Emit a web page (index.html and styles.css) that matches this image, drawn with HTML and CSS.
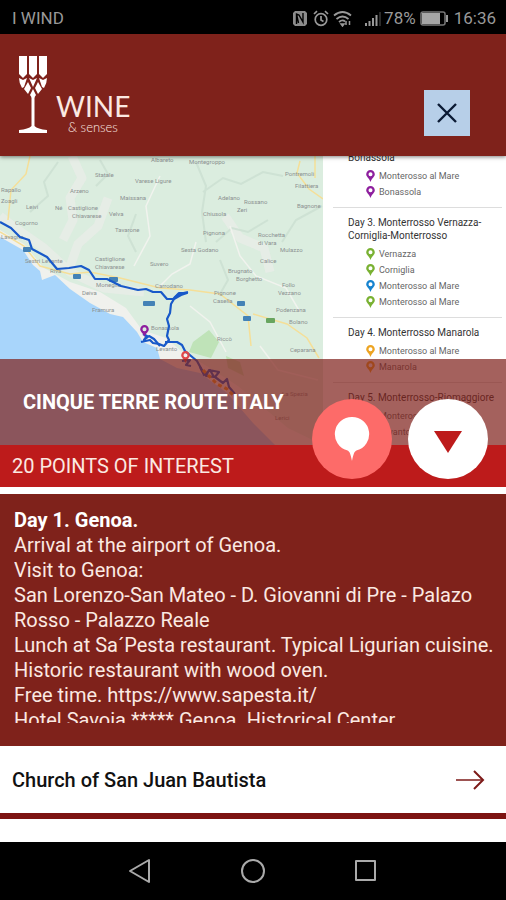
FILE: index.html
```html
<!DOCTYPE html>
<html lang="en">
<head>
    <meta charset="utf-8">
    <meta name="viewport" content="width=device-width, initial-scale=1">
    <title>Wine &amp; senses</title>
    <link rel="stylesheet" href="styles.css">
</head>
<body>
    <!-- shared icons -->
    <svg class="defs" width="0" height="0">
        <symbol id="pin" viewBox="0 0 9 12">
            <path fill="currentColor" fill-rule="evenodd" d="M4.500 0A4.300 4.300 0 0 0 .2 4.300C.2 7 3.300 8.200 4.500 12 5.700 8.200 8.800 7 8.800 4.300A4.300 4.300 0 0 0 4.500 0zM4.500 2.300a2 2 0 1 1 0 4 2 2 0 0 1 0-4z"/>
        </symbol>
    </svg>

    <div class="status-bar">
        <span>I WIND</span>
        <div class="status-icons">
            <svg width="16" height="17" viewBox="0 0 16 17">
                <path d="M3 1h10l2 2v11l-2 2H3l-2-2V3z" fill="#8c8c8c"/>
                <path d="M4.500 14V4l2.500 1 4 7V3M4.500 4l2 9" fill="none" stroke="#000" stroke-width="1.400"/>
            </svg>
            <svg class="alarm" width="16" height="17" viewBox="0 0 16 17" fill="none" stroke="#999" stroke-width="1.700">
                <circle cx="8" cy="9.500" r="5.800"/>
                <path d="M8 6v4l2.500 1.500M1 4l3-2.800M15 4l-3-2.800"/>
            </svg>
            <svg class="wifi" width="19" height="17" viewBox="0 0 19 17" fill="none" stroke="#999" stroke-width="1.800">
                <path d="M1 5.500Q9.500-1.500 18 5.500M3.500 9Q9.500 4 15.500 9M6 12Q9.500 9 12 11.500"/>
                <path d="M8 14h3l-1.500 2zM13 11v4M16.500 11v4" stroke-width="1.500"/>
            </svg>
            <svg class="signal" width="16" height="17" viewBox="0 0 16 17" fill="#999">
                <path d="M0 13h2v3H0zM3.500 11h2v5h-2zM7 8h2v8H7zM10.500 5h2v11h-2z"/>
                <path d="M14.500 2h1v14h-1z" fill="#555"/>
            </svg>
            <span>78%</span>
            <svg class="battery" width="29" height="15" viewBox="0 0 29 15">
                <rect x="1" y="1" width="24" height="13" rx="2" fill="none" stroke="#777" stroke-width="1.500"/>
                <rect x="2" y="2" width="18" height="11" fill="#a5a5a5"/>
                <rect x="26" y="4" width="2" height="7" fill="#999"/>
            </svg>
            <span>16:36</span>
        </div>
    </div>

    <header class="header">
        <a class="logo" href="#">
            <svg width="30" height="78" viewBox="0 0 30 78" fill="#fff">
                <path d="M1 0h8v18l-4 4-4-4zM11 0h8v18l-4 4-4-4zM21 0h8v18l-4 4-4-4z"/>
                <path d="M1 22l4 2 4-2-3 9-2 1q-3-5-3-10zM11 22l4 2 4-2-4 9zM29 22l-4 2-4-2 3 9 2 1q3-5 3-10z"/>
                <path d="M10 26l3 6-3 6-4-5zM20 26l-3 6 3 6 4-5zM15 33l3 6-2 3h-2l-2-3z"/>
                <path d="M13.500 41h3v29q3 3 12.500 4v3H1v-3q9.500-1 12.500-4z"/>
            </svg>
            <span class="logo-text">
                <span class="logo-name">WINE</span>
                <span class="logo-sub">&amp; senses</span>
            </span>
        </a>
        <button class="close" aria-label="Close">
            <svg width="20" height="20" viewBox="0 0 20 20" fill="none" stroke="#0b1a33" stroke-width="2.400">
                <path d="M1 1l18 18M19 1L1 19"/>
            </svg>
        </button>
    </header>

    <section class="hero">
        <svg class="map" viewBox="0 0 323 289" preserveAspectRatio="xMinYMin slice">
            <rect width="323" height="289" fill="#dbeddf"/>
            <!-- terrain -->
            <g fill="none" stroke="#e8ece7" stroke-width="9" stroke-linejoin="round" opacity=".8">
                <path d="M72 0l10 22-12 20 3 22-10 20M108 42l-10 28-20 18-10 28M0 60l18 14 26 18 26 24 34 16 40 4M225 60l15 22 24 10 6 24"/>
            </g>
            <g fill="none" stroke="#cbdfd1" stroke-width="2" opacity=".8">
                <path d="M58 6l-14 20 4 14-18 16M100 4l8 14-12 12M196 6l10 24-4 26 4 30M203 36l20-14 18 6 22-12 20 4M268 64l-20 12-16-4-16 14M322 50l-26 14-14 22M136 58l-8 22 8 16M220 104l8 20-8 14"/>
            </g>
            <g fill="none" stroke="#f1f3ee" stroke-width="1.500">
                <path d="M160 20l-14 30 4 30-16 30M196 86l-6 22-18 10-14 14M230 70l10 30 16 20 30 12 14 24M190 150l20 16 16 30M260 190l18 24 40 10"/>
            </g>
            <path d="M193 186l16-12 10 12-8 16-22-6zM226 200l14 6 4 14-16-8z" fill="#bfe3b8"/>
            <!-- coast -->
            <path d="M0 74l24 14 20 24 26 14 30 10 26 16 16 22 24 8 14 12 30 18 28 18 50 42 35 17H0z" fill="#f0f1ed"/>
            <path d="M0 81l23 13 10 15 7 6 2 9 13-5 15 14 20 14 20 11 13 3 14 15 6 10 14 6 3 11 17 9 23 5 27 20 26 30 22 22H0z" fill="#a8d5fb"/>
            <!-- main roads -->
            <g fill="none" stroke="#f5df98" stroke-width="1.500">
                <path d="M30 0l-4 18-15 16-3 30M0 76l24 14 16 20 30 8 20-2 30 6 40 10 30 2 30 4 28 22 3 30M253 158l34 10 20 14 12 20M323 43l-14-10-12-16 3-12M315 0v22"/>
            </g>
            <g fill="#4482b6">
                <rect x="23" y="91" width="8" height="5" rx="1"/>
                <rect x="73" y="118" width="8" height="5" rx="1"/>
                <rect x="109" y="121" width="9" height="5" rx="1"/>
                <rect x="143" y="145" width="12" height="5" rx="1"/>
                <rect x="237" y="145" width="8" height="5" rx="1"/>
                <rect x="243" y="160" width="8" height="5" rx="1"/>
            </g>
            <rect x="266" y="162" width="9" height="5" rx="1" fill="#68a55f"/>
            <g class="map-labels">
                <text x="151" y="6">Albareto</text>
                <text x="189" y="8">Montegroppo</text>
                <text x="95" y="21">Statale</text>
                <text x="135" y="27">Varese Ligure</text>
                <text x="70" y="37">Arzeno</text>
                <text x="120" y="44">Maissana</text>
                <text x="26" y="53">Leivi</text>
                <text x="55" y="54">Né</text>
                <text x="68" y="54">Castiglione</text>
                <text x="72" y="62">Chiavarese</text>
                <text x="109" y="60">Velva</text>
                <text x="1" y="36">Rapallo</text>
                <text x="1" y="47">Zoagli</text>
                <text x="15" y="69">Cogorno</text>
                <text x="1" y="83">Lavagna</text>
                <text x="115" y="76">Tavarone</text>
                <text x="25" y="107">Sestri Levante</text>
                <text x="95" y="105">Castiglione</text>
                <text x="95" y="113">Chiavarese</text>
                <text x="150" y="110">Suvero</text>
                <text x="50" y="117">Riva</text>
                <text x="96" y="131">Moneglia</text>
                <text x="82" y="139">Deiva</text>
                <text x="155" y="132">Carrodano</text>
                <text x="218" y="44">Adelano</text>
                <text x="244" y="48">Rossano</text>
                <text x="237" y="56">Zeri</text>
                <text x="203" y="60">Chiusola</text>
                <text x="203" y="79">Pignona</text>
                <text x="181" y="96">Sesta Godano</text>
                <text x="258" y="81">Rocchetta</text>
                <text x="258" y="89">di Vara</text>
                <text x="280" y="96">Mulazzo</text>
                <text x="260" y="107">Calice</text>
                <text x="285" y="20">Pontremoli</text>
                <text x="295" y="32">Filattiera</text>
                <text x="297" y="52">Bagnone</text>
                <text x="228" y="117">Brugnato</text>
                <text x="236" y="125">Borghetto</text>
                <text x="282" y="131">Follo</text>
                <text x="278" y="139">Vezzano</text>
                <text x="214" y="139">Pignone</text>
                <text x="213" y="147">Casella</text>
                <text x="92" y="156">Framura</text>
                <text x="151" y="174">Bonassola</text>
                <text x="156" y="195">Levanto</text>
                <text x="217" y="185">Riccò</text>
                <text x="276" y="156">Podenzana</text>
                <text x="289" y="168">Bolano</text>
                <text x="290" y="196">Ceparana</text>
                <text x="282" y="240">La Spezia</text>
                <text x="275" y="264">Lerici</text>
            </g>
            <!-- route -->
            <g fill="none" stroke="#1859c9" stroke-width="2.200" stroke-linejoin="round">
                <path d="M0 66l11 6 9 9 9 3 3 9 15 8 10 12 12-1 12-2 8 4 6 9 12 0 14 7 17 4 8-1 7 3 8 0 6 7 6 0 6-5 9-2"/>
                <path d="M174 142l5-5h8l-6 2-7 4-3 5-1 9-3 6 2 7-2 10 2 4-5 6-5-2-6-1-3-3-9 2M165 186l12 0 5 3 3 6 12 10 6 11"/>
                <path d="M143 178l4 2-3 4 5-4 5 3 6 7M182 205l8-1-4 5 5 1M200 211l4 8 6-5 4 7-8-1 3-6 10 2-4 5 8 6 4-4 2 8 6 7"/>
            </g>
            <path d="M203 214l8 8 6 6 10 5 8 8" fill="none" stroke="#e99a27" stroke-width="3" stroke-dasharray="4 3"/>
            <g color="#8e1f9e"><use href="#pin" x="140" y="169" width="9" height="12"/></g>
            <g color="#e0484a"><use href="#pin" x="181" y="195" width="9" height="12"/></g>
        </svg>

        <aside class="days">
            <div class="day">
                <h3>Bonassola</h3>
                <ul>
                    <li class="purple"><svg><use href="#pin"/></svg>Monterosso al Mare</li>
                    <li class="purple"><svg><use href="#pin"/></svg>Bonassola</li>
                </ul>
            </div>
            <div class="day">
                <h3>Day 3. Monterrosso Vernazza-<br>Corniglia-Monterrosso</h3>
                <ul>
                    <li class="green"><svg><use href="#pin"/></svg>Vernazza</li>
                    <li class="green"><svg><use href="#pin"/></svg>Corniglia</li>
                    <li class="blue"><svg><use href="#pin"/></svg>Monterosso al Mare</li>
                    <li class="green"><svg><use href="#pin"/></svg>Monterosso al Mare</li>
                </ul>
            </div>
            <div class="day">
                <h3>Day 4. Monterrosso Manarola</h3>
                <ul>
                    <li class="orange"><svg><use href="#pin"/></svg>Monterosso al Mare</li>
                    <li class="orange"><svg><use href="#pin"/></svg>Manarola</li>
                </ul>
            </div>
            <div class="day">
                <h3>Day 5. Monterrosso-Riomaggiore</h3>
                <ul>
                    <li class="orange"><svg><use href="#pin"/></svg>Monterosso</li>
                    <li class="orange"><svg><use href="#pin"/></svg>Levanto</li>
                </ul>
            </div>
        </aside>

        <div class="hero-title">
            <h1>CINQUE TERRE ROUTE ITALY</h1>
        </div>
    </section>

    <div class="points">
        <h2>20 POINTS OF INTEREST</h2>
        <div class="actions">
            <button class="action-map" aria-label="Show on map">
                <svg width="36" height="46" viewBox="0 0 36 46">
                    <path d="M18 1a17 17 0 0 1 5 33.300c-3 1-3.500 4-5 10.700-1.500-6.700-2-9.700-5-10.700A17 17 0 0 1 18 1z" fill="#fff"/>
                </svg>
            </button>
            <button class="action-more" aria-label="Show more">
                <svg class="triangle" width="28" height="22" viewBox="0 0 28 22">
                    <path d="M0 0h28L14 22z" fill="#bd1b1b"/>
                </svg>
            </button>
        </div>
    </div>

    <article class="description">
        <div class="description-text">
            <strong>Day 1. Genoa.</strong>
            <p>Arrival at the airport of Genoa.</p>
            <p>Visit to Genoa:</p>
            <p>San Lorenzo-San Mateo - D. Giovanni di Pre - Palazo Rosso - Palazzo Reale</p>
            <p>Lunch at Sa´Pesta restaurant. Typical Ligurian cuisine. Historic restaurant with wood oven.</p>
            <p>Free time. https://www.sapesta.it/</p>
            <p>Hotel Savoia ***** Genoa. Historical Center</p>
        </div>
    </article>

    <main class="places">
        <a class="place" href="#">
            Church of San Juan Bautista
            <svg width="29" height="20" viewBox="0 0 29 20" fill="none" stroke="#7d1a18">
                <path d="M0 10h27" stroke-width="1.500"/>
                <path d="M18 1l9 9-9 9" stroke-width="2"/>
            </svg>
        </a>
    </main>

    <nav class="nav-bar">
        <button aria-label="Back">
            <svg width="24" height="26" viewBox="0 0 24 26"><path d="M21 2v22L2 13z"/></svg>
        </button>
        <button aria-label="Home">
            <svg width="26" height="26" viewBox="0 0 26 26"><circle cx="13" cy="13" r="11"/></svg>
        </button>
        <button aria-label="Recent apps">
            <svg width="24" height="24" viewBox="0 0 24 24"><rect x="2" y="2" width="19" height="19"/></svg>
        </button>
    </nav>
</body>
</html>
```
FILE: styles.css
```css
* {
    box-sizing: border-box;
}

body {
    margin: 0;
    min-height: 100vh;
    display: flex;
    flex-direction: column;
    font-family: Roboto, "Liberation Sans", sans-serif;
    font-size: 20px;
    background-color: #fff;
}

h1, h2, h3, p, ul {
    margin: 0;
    padding: 0;
}

button {
    padding: 0;
    border: none;
    display: flex;
    justify-content: center;
    align-items: center;
    cursor: pointer;
}

.defs {
    position: absolute;
}

.status-bar {
    height: 34px;
    padding: 2px 10px 0 12px;
    display: flex;
    justify-content: space-between;
    align-items: center;
    background-color: #000;
    color: #999;
    font-size: 17px;
}

.status-icons {
    display: flex;
    align-items: center;
}

.alarm {
    margin-left: 5px;
}

.wifi {
    margin-left: 4px;
}

.signal {
    margin: 0 3px 0 13px;
}

.battery {
    margin: 0 5px 0 4px;
}

.header {
    position: relative;
    z-index: 1;
    height: 122px;
    padding: 0 36px 0 18px;
    display: flex;
    justify-content: space-between;
    background-color: #7f221b;
    box-shadow: 0 1px 4px rgba(0, 0, 0, 0.5);
}

.logo {
    display: flex;
    gap: 8px;
    padding-top: 22px;
    color: #fff;
    text-decoration: none;
}

.logo-text {
    display: flex;
    flex-direction: column;
    padding-top: 37px;
    font-family: Lato, "Liberation Sans", sans-serif;
    color: #fbe9e2;
}

.logo-name {
    font-size: 28px;
    line-height: 26px;
}

.logo-sub {
    padding-left: 12px;
    font-size: 13px;
    line-height: 16px;
    font-weight: 300;
}

.close {
    width: 46px;
    height: 46px;
    margin-top: 56px;
    background-color: #b7cfe8;
}

.hero {
    position: relative;
    height: 289px;
    display: flex;
    overflow: hidden;
}

.map {
    flex: 1;
    min-width: 0;
    height: 100%;
}

.map-labels {
    font-size: 6px;
    fill: #8b9191;
}

.days {
    width: 183px;
    margin-top: -14px;
    padding: 0 4px 0 10px;
}

.day {
    border-top: 1px solid #ddd;
    padding: 8px 0 7px 15px;
    font-size: 9px;
}

.day h3 {
    margin-bottom: 4px;
    font-size: 10px;
    line-height: 13px;
    font-weight: 400;
    color: #333;
    white-space: nowrap;
}

.day ul {
    padding-left: 18px;
    list-style: none;
}

.day li {
    display: flex;
    align-items: center;
    gap: 4px;
    line-height: 16px;
    color: #666;
}

.day li svg {
    width: 9px;
    height: 12px;
}

.purple svg {
    color: #8e1f9e;
}

.green svg {
    color: #79b132;
}

.blue svg {
    color: #1683cf;
}

.orange svg {
    color: #eda422;
}

.hero-title {
    position: absolute;
    left: 0;
    right: 0;
    bottom: 0;
    height: 86px;
    padding-left: 23px;
    display: flex;
    align-items: center;
    background-color: rgba(127, 33, 27, 0.71);
}

.hero-title h1 {
    font-size: 20px;
    font-weight: 700;
    color: #fff;
}

.points {
    position: relative;
    height: 42px;
    padding-left: 12px;
    display: flex;
    align-items: center;
    background-color: #bd1b1b;
}

.points h2 {
    font-size: 20px;
    font-weight: 400;
    color: #fbe9e2;
}

/* round buttons sit over the edge of the map */
.actions {
    position: absolute;
    right: 18px;
    bottom: 8px;
    display: flex;
    gap: 16px;
}

.actions button {
    width: 80px;
    height: 80px;
    border-radius: 50%;
}

.action-map {
    background-color: #fd6b69;
}

.action-more {
    background-color: #fff;
}

.triangle {
    margin-top: 6px;
}

.description {
    margin-top: 7px;
    padding: 14px 8px 23px 14px;
    background-color: #7f221b;
}

.description-text {
    max-height: 215px;
    overflow: hidden;
    color: #fbe9e2;
    line-height: 25px;
}

.description-text strong {
    color: #fff;
}

.places {
    flex: 1;
}

.place {
    height: 73px;
    padding: 0 21px 0 12px;
    display: flex;
    justify-content: space-between;
    align-items: center;
    border-bottom: 6px solid #7d1412;
    color: #111;
    font-size: 20px;
    font-weight: 500;
    text-decoration: none;
}

.nav-bar {
    height: 58px;
    display: flex;
    justify-content: center;
    align-items: center;
    gap: 88px;
    background-color: #000;
}

.nav-bar button {
    background: none;
}

.nav-bar svg {
    fill: none;
    stroke: #aaa;
    stroke-width: 2;
    stroke-linejoin: round;
}
```
